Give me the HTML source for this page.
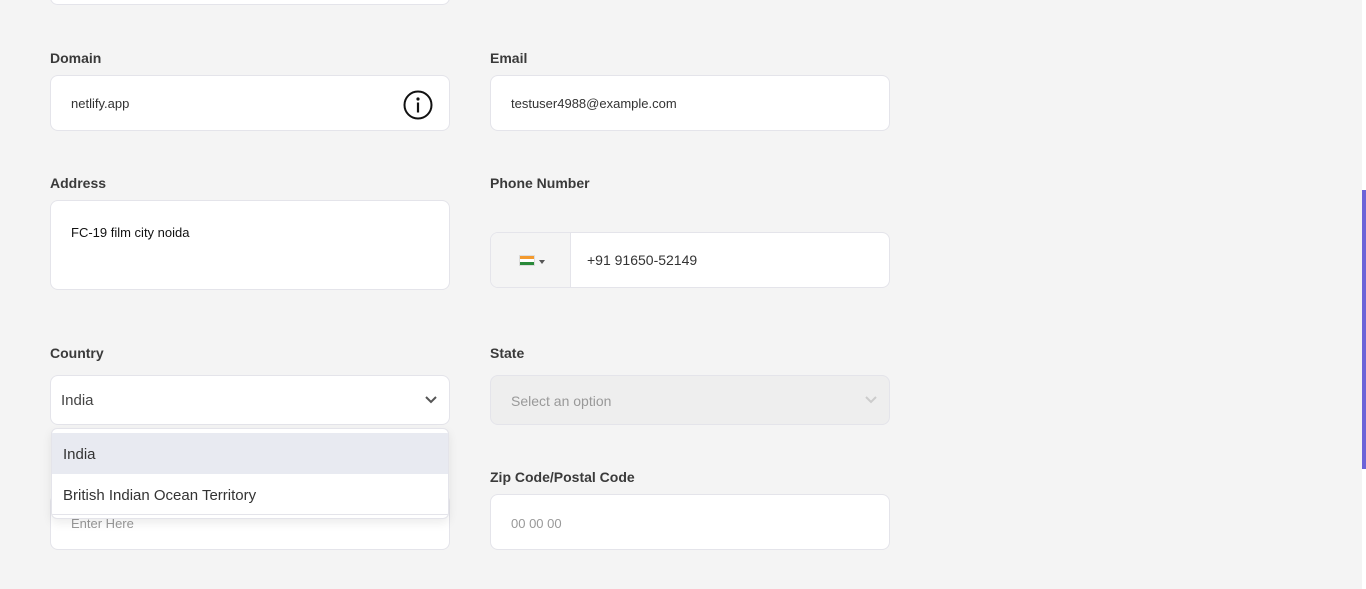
<!DOCTYPE html>
<html><head><style>
*{box-sizing:border-box;margin:0;padding:0}
body{width:1366px;height:589px;background:#f4f4f4;font-family:"Liberation Sans",sans-serif;position:relative;overflow:hidden;color:#333}
.a{position:absolute}
.lbl{font-size:14px;font-weight:bold;color:#3a3a3a}
.box{position:absolute;background:#fff;border:1px solid #e4e4ea;border-radius:8px}
.t{position:absolute;font-size:13px;color:#333}
</style></head><body>
<div class="box" style="left:50px;top:-10px;width:400px;height:15px"></div>
<div class="a lbl" style="left:50px;top:50px">Domain</div>
<div class="box" style="left:50px;top:75px;width:400px;height:56px"></div>
<div class="t" style="left:71px;top:96px">netlify.app</div>
<svg class="a" style="left:403px;top:90px" width="30" height="30" viewBox="0 0 30 30"><circle cx="15" cy="15" r="13.5" fill="none" stroke="#111" stroke-width="2"/><circle cx="15" cy="9" r="1.6" fill="#111"/><rect x="13.9" y="12.5" width="2.2" height="10" fill="#111"/></svg>
<div class="a lbl" style="left:490px;top:50px">Email</div>
<div class="box" style="left:490px;top:75px;width:400px;height:56px"></div>
<div class="t" style="left:511px;top:96px">testuser4988@example.com</div>

<div class="a lbl" style="left:50px;top:175px">Address</div>
<div class="box" style="left:50px;top:200px;width:400px;height:90px"></div>
<div class="t" style="left:71px;top:225px;color:#111">FC-19 film city noida</div>
<div class="a lbl" style="left:490px;top:175px">Phone Number</div>
<div class="box" style="left:490px;top:232px;width:400px;height:56px;overflow:hidden"><div class="a" style="left:0;top:0;width:80px;height:56px;background:#f4f4f4;border-right:1px solid #e4e4ea"></div>
<div class="a" style="left:28px;top:22px;width:16px;height:11px;border:1px solid #ddd"><div style="height:3px;background:#f39a2e"></div><div style="height:3px;background:#fff"></div><div style="height:3px;background:#2a8a3a"></div></div>
<div class="a" style="left:48px;top:27px;border-left:3px solid transparent;border-right:3px solid transparent;border-top:4px solid #555"></div></div>
<div class="t" style="left:587px;top:252px;font-size:14px">+91 91650-52149</div>

<div class="a lbl" style="left:50px;top:345px">Country</div>
<div class="box" style="left:50px;top:375px;width:400px;height:50px"></div>
<div class="t" style="left:61px;top:392px;font-size:15px;color:#444">India</div>
<svg class="a" style="left:424px;top:395px" width="14" height="10"><path d="M2 2l5 5 5-5" stroke="#555" stroke-width="2" fill="none"/></svg>
<div class="a lbl" style="left:490px;top:345px">State</div>
<div class="box" style="left:490px;top:375px;width:400px;height:50px;background:#eeeeee"></div>
<div class="t" style="left:511px;top:393px;font-size:14px;color:#999">Select an option</div>
<svg class="a" style="left:864px;top:395px" width="14" height="10"><path d="M2 2l5 5 5-5" stroke="#ccc" stroke-width="2" fill="none"/></svg>

<div class="box" style="left:50px;top:494px;width:400px;height:56px"></div>
<div class="t" style="left:71px;top:516px;color:#999">Enter Here</div>
<div class="a" style="left:51px;top:428px;width:398px;height:91px;background:#fff;border:1px solid #e4e4ea;border-radius:6px;box-shadow:0 4px 10px rgba(0,0,0,.08);overflow:hidden">
<div style="margin-top:4px;height:41px;background:#e8eaf1;padding:13px 11px 0;font-size:15px;color:#333">India</div>
<div style="height:41px;padding:13px 11px 0;font-size:15px;color:#333;border-bottom:1px solid #e4e4ea">British Indian Ocean Territory</div></div>

<div class="a lbl" style="left:490px;top:469px">Zip Code/Postal Code</div>
<div class="box" style="left:490px;top:494px;width:400px;height:56px"></div>
<div class="t" style="left:511px;top:516px;color:#999">00 00 00</div>

<div class="a" style="left:1362px;top:0;width:4px;height:589px;background:#fff"></div>
<div class="a" style="left:1362px;top:190px;width:4px;height:279px;background:#6c63d8"></div>
</body></html>
